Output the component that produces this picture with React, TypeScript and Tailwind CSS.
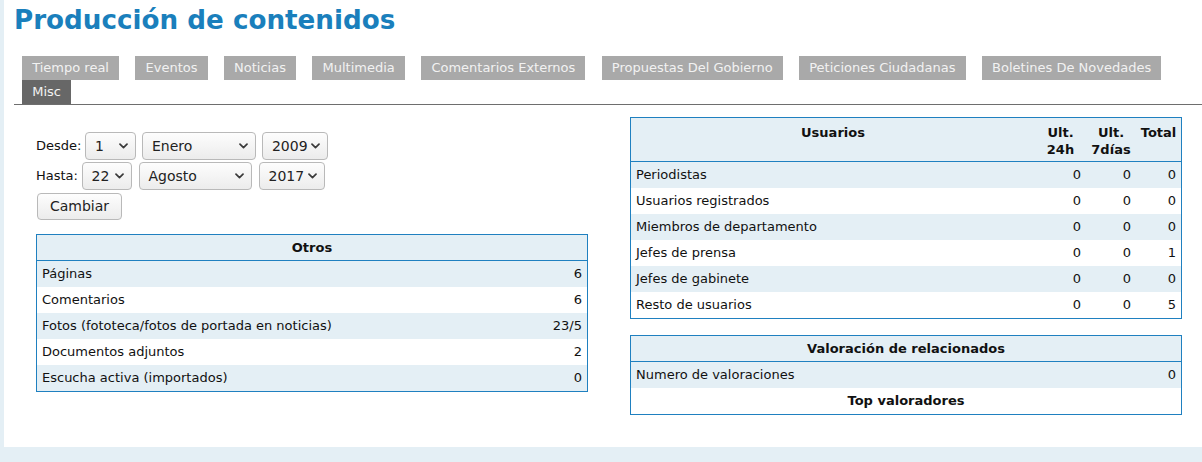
import React from "react";

const tabs = [
  "Tiempo real",
  "Eventos",
  "Noticias",
  "Multimedia",
  "Comentarios Externos",
  "Propuestas Del Gobierno",
  "Peticiones Ciudadanas",
  "Boletines De Novedades",
];

function Chevron() {
  return (
    <svg width="9" height="6" viewBox="0 0 9 6" className="shrink-0">
      <polyline points="1,1.2 4.5,4.6 8,1.2" fill="none" stroke="#3a3a3a" strokeWidth="1.7" strokeLinecap="round" strokeLinejoin="round" />
    </svg>
  );
}

function Select({ text, w }: { text: string; w: string }) {
  return (
    <div
      className={`${w} h-[28px] flex items-center justify-between pl-[8.5px] pr-[7px] rounded-[4px] border border-[#b9b9b9] bg-gradient-to-b from-[#fdfdfd] to-[#ececec] text-[14px] text-[#222]`}
    >
      <span>{text}</span>
      <Chevron />
    </div>
  );
}

function Row({ label, values, odd }: { label: string; values: string[]; odd: boolean }) {
  return (
    <div className={`flex h-[26px] items-center ${odd ? "bg-[#e4eff5]" : "bg-white"}`}>
      <div className="flex-1 pl-[5px]">{label}</div>
      {values.length === 1 ? (
        <div className="pr-[5px] text-right">{values[0]}</div>
      ) : (
        <>
          <div className="w-[51px] pr-[5px] text-right">{values[0]}</div>
          <div className="w-[50px] pr-[5px] text-right">{values[1]}</div>
          <div className="w-[45px] pr-[5px] text-right">{values[2]}</div>
        </>
      )}
    </div>
  );
}

export default function App() {
  const otros: [string, string][] = [
    ["Páginas", "6"],
    ["Comentarios", "6"],
    ["Fotos (fototeca/fotos de portada en noticias)", "23/5"],
    ["Documentos adjuntos", "2"],
    ["Escucha activa (importados)", "0"],
  ];
  const usuarios: [string, string, string, string][] = [
    ["Periodistas", "0", "0", "0"],
    ["Usuarios registrados", "0", "0", "0"],
    ["Miembros de departamento", "0", "0", "0"],
    ["Jefes de prensa", "0", "0", "1"],
    ["Jefes de gabinete", "0", "0", "0"],
    ["Resto de usuarios", "0", "0", "5"],
  ];
  return (
    <div className="w-[1202px] h-[462px] bg-[#e4eff5] pl-[4px] overflow-hidden font-['DejaVu_Sans',sans-serif] text-[13px] text-[#111]">
      <div className="bg-white h-[447px] pl-[10px] pt-[5px]">
        <h1 className="text-[26.2px] font-bold text-[#1a7fbc] leading-[30px]">Producción de contenidos</h1>
        <div className="mt-[21px] border-b border-[#6e6e6e] pl-[8px] flex flex-wrap gap-x-[16.2px]">
          {tabs.map((t) => (
            <div key={t} className="h-[24px] px-[10.2px] flex items-center bg-[#a9a9a9] text-[#f2f2f2]">
              {t}
            </div>
          ))}
          <div className="h-[24px] px-[10.2px] flex items-center bg-[#676767] text-[#f2f2f2]">Misc</div>
        </div>

        <div className="flex pt-[12px]">
          <div className="ml-[22px] w-[552px] pt-[15px]">
            <div className="flex items-center">
              <span className="mr-[4px]">Desde:</span>
              <Select text="1" w="w-[51px]" />
              <div className="w-[6px]" />
              <Select text="Enero" w="w-[114px]" />
              <div className="w-[6px]" />
              <Select text="2009" w="w-[66px]" />
            </div>
            <div className="flex items-center mt-[2px]">
              <span className="mr-[4px]">Hasta:</span>
              <Select text="22" w="w-[50px]" />
              <div className="w-[7px]" />
              <Select text="Agosto" w="w-[113px]" />
              <div className="w-[7px]" />
              <Select text="2017" w="w-[66px]" />
            </div>
            <div className="mt-[3px] ml-[1px] w-[85px] h-[27px] flex items-center justify-center rounded-[4px] border border-[#b9b9b9] bg-gradient-to-b from-[#fdfdfd] to-[#ececec] text-[14px] text-[#222]">
              Cambiar
            </div>
            <div className="mt-[14px] border border-[#1f80c0]">
              <div className="h-[26px] flex items-center justify-center font-bold bg-[#e4eff5] border-b border-[#1f80c0]">
                Otros
              </div>
              {otros.map(([l, v], i) => (
                <Row key={l} label={l} values={[v]} odd={i % 2 === 0} />
              ))}
            </div>
          </div>

          <div className="ml-[42px] w-[552px]">
            <div className="border border-[#1f80c0]">
              <div className="flex bg-[#e4eff5] border-b border-[#1f80c0] font-bold pt-[6px] h-[44px] leading-[17px]">
                <div className="flex-1 text-center">Usuarios</div>
                <div className="w-[51px] text-center">
                  Ult.
                  <br />
                  24h
                </div>
                <div className="w-[50px] text-center">
                  Ult.
                  <br />
                  7días
                </div>
                <div className="w-[45px] text-center">Total</div>
              </div>
              {usuarios.map(([l, a, b, c], i) => (
                <Row key={l} label={l} values={[a, b, c]} odd={i % 2 === 0} />
              ))}
            </div>

            <div className="mt-[16px] border border-[#1f80c0]">
              <div className="h-[26px] flex items-center justify-center font-bold bg-[#e4eff5] border-b border-[#1f80c0]">
                Valoración de relacionados
              </div>
              <Row label="Numero de valoraciones" values={["0"]} odd={true} />
              <div className="h-[26px] flex items-center justify-center font-bold bg-white">Top valoradores</div>
            </div>
          </div>
        </div>
      </div>
    </div>
  );
}
